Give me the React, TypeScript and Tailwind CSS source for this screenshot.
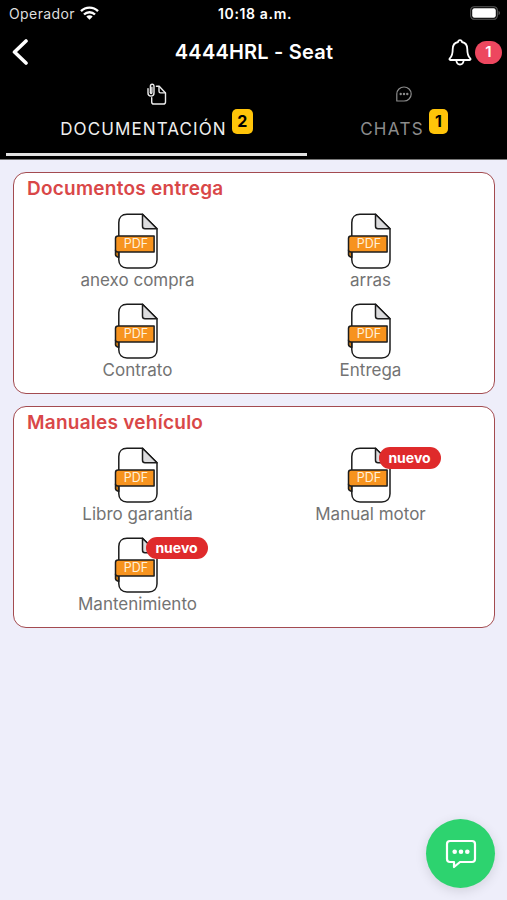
import { useState } from 'react';

interface DocumentItem {
  name: string;
  isNew?: boolean;
}

interface Section {
  title: string;
  documents: DocumentItem[];
}

const sections: Section[] = [
  {
    title: 'Documentos entrega',
    documents: [{ name: 'anexo compra' }, { name: 'arras' }, { name: 'Contrato' }, { name: 'Entrega' }]
  },
  {
    title: 'Manuales vehículo',
    documents: [
      { name: 'Libro garantía' },
      { name: 'Manual motor', isNew: true },
      { name: 'Mantenimiento', isNew: true }
    ]
  }
];

const WifiIcon = () => (
  <svg className="-mt-[2px]" width="19" height="14" viewBox="0 0 19 14" fill="none" stroke="white" strokeWidth="2.4">
    <path d="M1 5.2a12 12 0 0 1 17 0" />
    <path d="M4 8.5a7.8 7.8 0 0 1 11 0" />
    <path d="M9.5 13.7 6.3 10.6a4.6 4.6 0 0 1 6.4 0Z" fill="white" stroke="none" />
  </svg>
);

const BatteryIcon = () => (
  <svg className="-mt-[2px]" width="31" height="14" viewBox="0 0 31 14" fill="none">
    <rect x="0.7" y="0.7" width="26.6" height="12.6" rx="3.6" stroke="#5c5c5c" strokeWidth="1.1" />
    <rect x="2.2" y="2.2" width="23.6" height="9.6" rx="2.2" fill="white" />
    <path d="M28.6 4.8c1.6.7 1.6 3.7 0 4.4Z" fill="#6b6b6b" />
  </svg>
);

const BellIcon = () => (
  <svg width="24" height="27" viewBox="0 0 24 27" fill="none" stroke="white" strokeWidth="1.8" strokeLinejoin="round">
    <path d="M12 1.2c-1.2 0-1.8.6-1.9 1.8C6.5 3.7 4.7 6.7 4.7 10.2c0 5.3-.8 7.3-2.9 9.2-.7.7-.4 1.6.6 1.6h19.2c1 0 1.3-.9.6-1.6-2.1-1.9-2.9-3.9-2.9-9.2 0-3.5-1.8-6.5-5.4-7.2-.1-1.2-.7-1.8-1.9-1.8Z" />
    <path d="M8.3 21.3c.2 2.7 1.5 4.2 3.7 4.2s3.5-1.5 3.7-4.2" />
  </svg>
);

const AttachedDocumentIcon = () => (
  <svg width="20" height="23" viewBox="0 0 20 23" fill="none" stroke="#ececec" strokeWidth="1.4" strokeLinecap="round" strokeLinejoin="round">
    <path d="M4.7 14.8v4.1c0 1.4.7 2.1 2.1 2.1h9.6c1.4 0 2.1-.7 2.1-2.1v-9l-6.3-6.7H9.400" />
    <path d="M12 3.400v4.900c0 1 .6 1.600 1.600 1.600h4.700" />
    <path d="M1 5.600V10c0 2 1.200 3.100 3 3.100s3-1.100 3-3.100V3.300c0-1.300-.7-2.100-1.800-2.100s-1.800.8-1.800 2.100v6.300" />
    <path d="M3.400 9.600c0 1.100 1.500 1.100 1.500 0V4.300" />
  </svg>
);

const ChatBubbleIcon = () => (
  <svg width="16" height="16" viewBox="0 0 16 16" fill="none" stroke="#8c8c8c" strokeWidth="1.2">
    <path d="M.8 15V8A7.2 7 0 1 1 8 15H.8Z" strokeLinejoin="round" />
    <g fill="#8c8c8c" stroke="none">
      <circle cx="4.7" cy="8" r="1.2" />
      <circle cx="8" cy="8" r="1.2" />
      <circle cx="11.3" cy="8" r="1.2" />
    </g>
  </svg>
);

const PdfIcon = () => (
  <svg className="block" width="46" height="56" viewBox="0 0 46 56" fill="none" stroke="#1c1c1c" strokeWidth="1.5" strokeLinejoin="round">
    <path d="M28.5 1.2H13c-5 0-8.2 3.2-8.2 8.2v37.4c0 5 3.2 8.2 8.2 8.2h21.8c5 0 8.2-3.2 8.2-8.2V15.7Z" fill="white" />
    <path d="M28.5 1.2v12c0 1.8.7 2.5 2.5 2.5h12Z" fill="#dcdcde" />
    <path d="M1.5 37v4.8c0 1.4 1.3 2.1 3.3 2.6v-5.7Z" fill="#c97813" />
    <path d="M4.1 23h36v15.9H3.7c-1.5 0-2.2-.8-2.2-2.2V25.5c0-1.6.9-2.5 2.6-2.5Z" fill="#f7931e" />
    <text x="22" y="35.3" textAnchor="middle" fill="#fff0da" stroke="none" fontSize="12.5">PDF</text>
  </svg>
);

const TabBadge = ({ count, className }: { count: number; className: string }) => (
  <span className={`flex h-[25px] items-center justify-center rounded-[5px] bg-[#ffc409] pb-px text-base font-bold text-black ${className}`}>
    {count}
  </span>
);

const DocumentTile = ({ document }: { document: DocumentItem }) => (
  <button className="flex h-[89.5px] flex-col items-center">
    <span className="relative mr-[2px]">
      <PdfIcon />
      {document.isNew && (
        <span className="absolute top-0 left-[32px] flex h-[22px] w-[62px] items-center justify-center rounded-full bg-[#df2a2b] text-sm font-bold text-white">
          nuevo
        </span>
      )}
    </span>
    <span className="text-[17px] leading-[23px] text-[#737373]">{document.name}</span>
  </button>
);

const App = () => {
  const [activeTab, setActiveTab] = useState('documentacion');

  return (
    <div className="relative flex h-[900px] w-[507px] flex-col overflow-hidden bg-[#eeeefa] font-['Inter',sans-serif]">
      <header className="h-40 border-b border-[#777] bg-black text-white">
        <div className="grid h-7 grid-cols-3 items-center pr-[6px] pl-[9px]">
          <div className="flex items-center gap-[5px]">
            <span className="text-sm tracking-[0.4px] text-[#dedede]">Operador</span>
            <WifiIcon />
          </div>
          <span className="text-center text-sm font-semibold tracking-[0.65px] whitespace-nowrap">10:18 a.m.</span>
          <div className="flex justify-end">
            <BatteryIcon />
          </div>
        </div>

        <div className="grid h-12 grid-cols-[1fr_auto_1fr] items-center pr-[5px] pl-3">
          <button aria-label="Volver">
            <svg width="17" height="28" viewBox="0 0 17 28" fill="none" stroke="white" strokeWidth="3.6" strokeLinecap="round" strokeLinejoin="round">
              <path d="M14 3 2.5 14 14 25" />
            </svg>
          </button>
          <h1 className="mr-[6px] text-xl font-semibold tracking-[0.2px]">4444HRL - Seat</h1>
          <button className="flex items-center justify-end gap-[3px]" aria-label="Notificaciones">
            <BellIcon />
            <span className="flex h-[23px] w-[27px] items-center justify-center rounded-full bg-[#ed475f] text-[15px] font-semibold">1</span>
          </button>
        </div>

        <nav className="flex h-[83px] px-[6px]">
          <button
            onClick={() => setActiveTab('documentacion')}
            className={`mb-[3px] flex w-[301px] flex-col items-center border-b-[3px] pt-[7px] ${activeTab === 'documentacion' ? 'border-[#e2e2e2]' : 'border-transparent'}`}
          >
            <AttachedDocumentIcon />
            <span className="mt-[3px] flex gap-[5px]">
              <span className="pt-2 text-[17px] leading-6 tracking-[1.1px] text-[#efefef]">DOCUMENTACIÓN</span>
              <TabBadge count={2} className="w-[21px]" />
            </span>
          </button>
          <button
            onClick={() => setActiveTab('chats')}
            className={`mb-[3px] flex flex-1 flex-col items-center border-b-[3px] pt-[10px] ${activeTab === 'chats' ? 'border-[#e2e2e2]' : 'border-transparent'}`}
          >
            <ChatBubbleIcon />
            <span className="mt-[7px] flex gap-[5px]">
              <span className="pt-2 text-[17px] leading-6 tracking-[1.3px] text-[#8c8c8c]">CHATS</span>
              <TabBadge count={1} className="w-[19px]" />
            </span>
          </button>
        </nav>
      </header>

      <main className="flex flex-col gap-3 pt-3 pr-3 pl-[13px]">
        {sections.map(section => (
          <section key={section.title} className="h-[222px] rounded-[13px] border-[1.5px] border-[#a34b50] bg-white px-[7px]">
            <h2 className="mt-[2px] mb-[11px] pl-[6px] text-[19px] leading-[27px] font-semibold tracking-[0.25px] text-[#d94748]">{section.title}</h2>
            <div className="grid grid-cols-[233px_233px]">
              {section.documents.map(document => (
                <DocumentTile key={document.name} document={document} />
              ))}
            </div>
          </section>
        ))}
      </main>

      <button
        aria-label="Abrir chat"
        className="absolute right-3 bottom-3 flex size-[69px] items-center justify-center rounded-full bg-[#2dd36f] shadow-[0_3px_12px_rgba(0,0,0,0.12)]"
      >
        <svg width="32" height="30" viewBox="0 0 32 30" fill="none" stroke="white" strokeWidth="2.2" strokeLinejoin="round">
          <path d="M5 2h22c2 0 3 1 3 3v15c0 2-1 3-3 3H15l-6 5v-5H5c-2 0-3-1-3-3V5c0-2 1-3 3-3Z" />
          <g fill="white" stroke="none">
            <circle cx="9.7" cy="12.7" r="2.3" />
            <circle cx="16" cy="12.7" r="2.3" />
            <circle cx="22.3" cy="12.7" r="2.3" />
          </g>
        </svg>
      </button>
    </div>
  );
};

export default App;
